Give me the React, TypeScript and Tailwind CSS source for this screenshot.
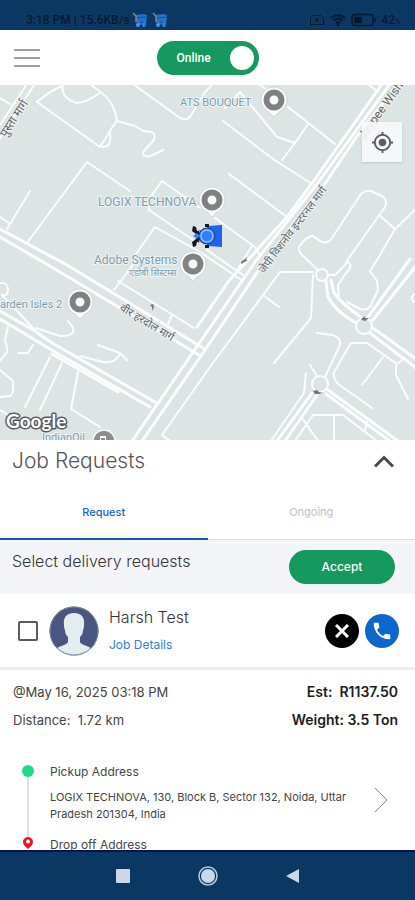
import { useState } from 'react';
import { MdPhone, MdMyLocation } from 'react-icons/md';

const roads = [
  'M27 84L-2 128 M34 85L-2 141 M0 98L10 104',
  'M62 86Q48 92 37 102L100 147L117 120Q114 102 102 93L90 84',
  'M63 84Q60 98 77 103Q88 102 101 92 M102 147Q112 148 110 133',
  'M117 121L135 126L143 131L152 132Q157 135 153 141L143 152Q142 157 151 156L163 150',
  'M133 84L180 118Q186 121 190 117L205 92L213 84',
  'M130 191L87 162L27 243 M30 191L7 229 M0 217L9 223',
  'M200 208L162 181L149 199L149 210L196 242',
  'M136 254L155 227L200 252L243 281 M135 262L114 290',
  'M118 281L194 328 M172 315L168 324',
  'M223 121L273 159L312 184 M368 84L378 92 M258 84L272 93 M240 92L225 108',
  'M240 92L277 137L295 143L308 124 M288 107L335 144 M295 143L282 160',
  'M229 174L287 217 M215 218L255 247L260 256',
  'M207 250L243 275 M252 246L236 272',
  'M320 241Q327 245 332 238L361 194Q365 190 371 191L382 196Q388 200 385 207L346 262',
  'M320 241L313 236Q306 236 299 247Q298 251 302 255L317 269',
  'M380 216L395 229L416 209 M395 229L377 260L370 271L377 281L378 290L371 305Q368 311 360 309L347 302',
  'M162 435L210 367L280 272L313 272 M162 435L170 441 M313 275L311 318L274 363 M263 295L279 307',
  'M328 275L335 275L348 262Q354 266 346 273L338 285L339 300',
  'M317 333L333 335Q342 339 340 345L325 377 M310 365L317 376 M306 373L304 393L271 441',
  'M372 408L338 384Q332 376 334 372L351 343L367 343L397 364L403 359 M383 357L362 385 M396 366L396 375L408 399',
  'M295 441L313 415L343 415L377 441 M334 415V441 M302 418L318 441 M367 422L365 430',
  'M0 283Q8 282 8 290Q8 296 2 295L35 330 M36 328L60 336Q78 336 72 326L68 321',
  'M80 356L103 362Q116 364 120 353L98 345 M120 353L127 360',
  'M8 327L5 340Q8 350 7 352L0 361 M33 345L28 353L18 353 M0 370L13 381Q14 394 10 396L0 397',
  'M50 357L25 407 M62 363L40 410 M78 372L71 409L100 427 M0 410L10 416',
];

const mainRoads = [
  'M0 229L67 265L203 348 M0 237L43 262L199 355',
  'M382 84L313 182L287 217L228 282L197 327',
  'M390 84L317 184L255 262L198 345L132 441',
  'M398 84L357 136L324 185L260 268L205 350L142 441',
  'M0 311L35 331L52 343L155 402 M0 319L50 349L150 407 M52 354L118 392',
  'M326 281L328 297Q335 311 356 323 M331 280L334 293Q342 304 361 317',
  'M368 317L410 259 M373 320L416 266 M373 328L416 359 M370 333L416 368',
  'M312 393L277 441 M317 395L285 441 M328 390L398 441 M326 394L390 441',
];

const pins = [
  { x: 274, y: 100 },
  { x: 212, y: 200 },
  { x: 193, y: 264 },
  { x: 80, y: 302 },
];

function Pin({ x, y }: { x: number; y: number }) {
  return (
    <g transform={`translate(${x} ${y})`}>
      <path d="M0 17L-5 12A13 13 0 1 1 5 12Z" fill="#fafafa" stroke="#c9cfcf" strokeWidth="0.8" />
      <circle r="7.5" fill="none" stroke="#7f8182" strokeWidth="6" />
    </g>
  );
}

function MapView() {
  return (
    <svg viewBox="0 85 415 355" preserveAspectRatio="xMidYMid slice" className="block w-full" role="img" aria-label="Map">
      <rect y="84" width="415" height="358" fill="#dde4e4" />
      <g fill="none" stroke="#fcfdfd" strokeLinecap="round" strokeLinejoin="round">
        <g strokeWidth="2">{roads.map((d) => <path key={d} d={d} />)}</g>
        <g strokeWidth="3">{mainRoads.map((d) => <path key={d} d={d} />)}</g>
        <g strokeWidth="2">
          <circle cx="322" cy="275" r="6" fill="#dde4e4" />
          <circle cx="364" cy="326" r="8" fill="#dde4e4" />
          <circle cx="320" cy="384" r="8" fill="#dde4e4" />
          <circle cx="416" cy="298" r="4" />
        </g>
      </g>
      <g fill="#71767a">
        <path d="M361 319l4-3v2l4 0-4 3-3-1zM313 391l4-1 2 2 4 1-5 1-3 0zM241 262l6-5-1 3 2 0-7 4zM150 305l3-1 1 3-2 4 0-4z" />
      </g>

      <g className="font-['Roboto','Noto_Sans',sans-serif]" fontSize="11" fill="#7a9eb0" stroke="#eef3f4" strokeWidth="2" paintOrder="stroke">
        <text x="180" y="106">ATS BOUQUET</text>
        <text x="98" y="206" fontSize="12">LOGIX TECHNOVA</text>
        <text x="94" y="264" fontSize="12">Adobe Systems</text>
        <text x="129" y="276" fontSize="9">एडोबी सिस्टम्स</text>
        <text x="0" y="308" fontSize="11">arden Isles 2</text>
        <text x="42" y="441">IndianOil</text>
      </g>
      <g className="font-['Roboto','Noto_Sans',sans-serif]" fontSize="11" fill="#5c6468" stroke="#eef3f4" strokeWidth="2" paintOrder="stroke">
        <text transform="translate(6 138) rotate(-57)" fontSize="12">पुस्ता मार्ग</text>
        <text transform="translate(264 274) rotate(-53)">जेपी विशनोव इन्टरनल मार्ग</text>
        <text transform="translate(119 310) rotate(31)">वीर हरदोल मार्ग</text>
        <text transform="translate(364 140) rotate(-54)" fontSize="12">Jaypee Wishtown</text>
      </g>

      {pins.map((p) => <Pin key={`${p.x}-${p.y}`} x={p.x} y={p.y} />)}
      <g transform="translate(104 441)">
        <circle r="11" fill="#8c8f90" stroke="#fafafa" strokeWidth="1.5" />
        <rect x="-4" y="-5" width="6" height="8" rx="1" fill="#fff" />
        <rect x="-3" y="-3" width="4" height="2" fill="#8c8f90" />
      </g>

      {/* driver vehicle */}
      <path d="M207 226l15-1v22l-15-1z" fill="#1f63ee" />
      <path d="M193 226l3 1 1 4 5-1 2-2v16l-3-2-4 0-1 4-3 1-1-5 4-3v-5l-4-3z" fill="#111820" />
      <path d="M198 230l5 1-3 3zM198 243l5-1-3-3z" fill="#b09a80" />
      <circle cx="207" cy="236" r="8" fill="#2f7cf5" stroke="#123f9c" strokeWidth="1" />
      <circle cx="207" cy="236" r="6" fill="#2b82f7" stroke="#8fbcff" strokeWidth="1.5" />
      <path d="M193 236l4-3 3 3-3 3z" fill="#2b82f7" />
      <path d="M205 224h4v3h-4zM205 245h4v3h-4z" fill="#111820" />

      <text x="6" y="428" className="font-['Lato',sans-serif]" fontSize="19" fontWeight="700" fill="#fff" stroke="#55595b" strokeWidth="3" strokeLinejoin="round" paintOrder="stroke">Google</text>
    </svg>
  );
}

function TruckGlyph() {
  return (
    <svg viewBox="0 0 16 16" className="size-4">
      <path d="M4 3l7-1 4 1-1 9-9 1-1-6z" fill="#2273cb" />
      <path d="M1 1l3 3v6" fill="none" stroke="#8d8290" strokeWidth="1.5" />
      <path d="M5 6l9-1M8 10h3" stroke="#164c94" strokeWidth="1" />
      <circle cx="6" cy="13" r="2" fill="#4b95dd" />
      <circle cx="12" cy="13" r="2" fill="#2d7fd6" />
    </svg>
  );
}

function StatusBar() {
  return (
    <div className="flex h-[30px] shrink-0 items-end border-b border-[#1c2a6e] bg-[#0b3862] px-[26px] pb-px font-['Roboto',sans-serif] text-xs text-[#03182f]">
      <span className="font-medium">3:18 PM | 15.6KB/s</span>
      <span className="ml-[2px] flex gap-1"><TruckGlyph /><TruckGlyph /></span>
      <span className="mr-[-12px] ml-auto flex items-center gap-1">
        <svg viewBox="0 0 16 14" className="h-[14px] w-4" fill="none" stroke="#03182f">
          <path d="M4 2.5h8l2.5 3v6h-13v-6zM6 5l4 4M10 5L6 9" />
        </svg>
        <svg viewBox="0 0 16 14" className="mx-px h-[14px] w-4" fill="none" stroke="#03182f" strokeWidth="1.8">
          <path d="M1 5Q8-1 15 5M3.5 7.5Q8 3.5 12.500 7.500M6 10Q8 8.500 10 10" />
          <circle cx="8" cy="12" r="0.6" />
        </svg>
        <svg viewBox="0 0 26 14" className="h-[14px] w-[26px]" fill="none" stroke="#03182f" strokeWidth="1.5">
          <rect x="1" y="1.500" width="21" height="11" rx="2.500" />
          <path d="M24 5v4" />
          <rect x="4" y="4.500" width="6" height="5" fill="#03182f" />
        </svg>
        <span className="font-medium">42<span className="text-[8px]">%</span></span>
      </span>
    </div>
  );
}

function NavBar() {
  return (
    <nav className="flex h-[50px] shrink-0 items-center justify-center gap-[68px] border-t-2 border-[#10104f] bg-[#0b3862]">
      <button type="button" aria-label="Recents">
        <span className="block size-[14px] rounded-[1px] bg-[#ccd7e7]" />
      </button>
      <button type="button" aria-label="Home">
        <svg viewBox="0 0 20 20" className="size-5">
          <circle cx="10" cy="10" r="9" fill="none" stroke="#bccadd" strokeWidth="1.500" />
          <circle cx="10" cy="10" r="7" fill="#ccd7e7" />
        </svg>
      </button>
      <button type="button" aria-label="Back">
        <svg viewBox="0 0 14 14" className="size-[14px]">
          <path d="M13 0v14L0 7z" fill="#ccd7e7" />
        </svg>
      </button>
    </nav>
  );
}

export default function App() {
  const [online, setOnline] = useState(true);
  const [tab, setTab] = useState('request');
  const [selected, setSelected] = useState(false);

  return (
    <div className="flex h-screen flex-col overflow-hidden bg-white font-['Inter',sans-serif] text-[#444]">
      <StatusBar />

      <header className="grid h-[55px] shrink-0 grid-cols-[1fr_auto_1fr] items-center px-[14px]">
        <button type="button" aria-label="Menu" className="flex w-[26px] flex-col gap-[6px]">
          <span className="h-[2px] bg-[#a0a0a0]" />
          <span className="h-[2px] bg-[#a0a0a0]" />
          <span className="h-[2px] bg-[#a0a0a0]" />
        </button>
        <button
          type="button" role="switch" aria-checked={online}
          onClick={() => setOnline(!online)}
          className="flex h-[34px] w-[102px] items-center justify-between rounded-full bg-[#16995f] pr-[5px] pl-5 font-['Roboto',sans-serif] text-xs font-medium text-white"
        >
          Online
          <span className="size-6 rounded-full bg-white" />
        </button>
      </header>

      <main className="min-h-0 flex-1 overflow-hidden">
        <div className="relative">
          <MapView />
          <button type="button" aria-label="My location" className="absolute top-[37px] right-[13px] flex size-10 items-center justify-center bg-[#f7f8f9]/90 text-[#5d5d5d] shadow">
            <MdMyLocation size={23} />
          </button>
        </div>

        <div className="flex h-[42px] items-center justify-between pr-5 pl-3">
          <h1 className="text-[21px] font-light text-[#555]">Job Requests</h1>
          <button type="button" aria-label="Collapse">
            <svg viewBox="0 0 22 14" className="h-[14px] w-[22px]" fill="none" stroke="#4a4a4a" strokeWidth="3">
              <path d="M2 12.500L11 3.500L20 12.500" />
            </svg>
          </button>
        </div>

        <div role="tablist" className="grid h-[58px] grid-cols-2 text-[11px]">
          <button
            type="button" role="tab" aria-selected={tab === 'request'}
            onClick={() => setTab('request')}
            className={tab === 'request' ? 'border-b-2 border-[#1257b8] pt-1 font-medium text-[#1763bf]' : 'border-b border-[#dcdee2] pt-1 text-[#bfc0c2]'}
          >
            Request
          </button>
          <button
            type="button" role="tab" aria-selected={tab === 'ongoing'}
            onClick={() => setTab('ongoing')}
            className={tab === 'ongoing' ? 'border-b-2 border-[#1257b8] pt-1 font-medium text-[#1763bf]' : 'border-b border-[#dcdee2] pt-1 text-[#bfc0c2]'}
          >
            Ongoing
          </button>
        </div>

        <div className="flex h-[54px] items-center justify-between bg-[#f3f5f9] pr-5 pl-3">
          <p className="pb-3 text-base font-light text-[#333]">Select delivery requests</p>
          <button type="button" className="h-[34px] w-[106px] rounded-full bg-[#16995f] text-xs font-medium text-white">
            Accept
          </button>
        </div>

        <section className="flex h-[76px] items-center border-b-[3px] border-[#eeeff1] pr-4 pl-[18px]">
          <input
            type="checkbox" aria-label="Select Harsh Test" checked={selected}
            onChange={(e) => setSelected(e.target.checked)}
            className="size-5 appearance-none rounded-[2px] border-2 border-[#5a5a5a] checked:bg-[#16995f]"
          />
          <svg viewBox="0 0 50 50" className="ml-[11px] size-[50px]">
            <defs>
              <clipPath id="avatar"><circle cx="25" cy="25" r="24.500" /></clipPath>
            </defs>
            <g clipPath="url(#avatar)">
              <rect width="50" height="50" fill="#495681" />
              <path d="M25 7c-8 0-11 5-10 12 0 2 0 3 1 5 0 3 1 5 3 7v5c-1 3-9 4-12 7l-1 7h38l-1-7c-3-3-11-4-12-7v-5c2-2 3-4 3-7 1-2 1-3 1-5 1-7-2-12-10-12z" fill="#e3ecee" />
            </g>
            <circle cx="25" cy="25" r="24" fill="none" stroke="#7f8998" strokeWidth="1" />
          </svg>
          <div className="ml-[10px] flex-1">
            <h2 className="text-base leading-6 font-light text-[#333]">Harsh Test</h2>
            <a href="#details" className="block pt-1 text-xs leading-6 text-[#2f7fd0]">Job Details</a>
          </div>
          <div className="flex gap-[6px]">
            <button type="button" aria-label="Reject" className="flex size-[34px] items-center justify-center rounded-full bg-black">
              <svg viewBox="0 0 14 14" className="size-[14px]" stroke="#fff" strokeWidth="3">
                <path d="M1 1l12 12M13 1L1 13" />
              </svg>
            </button>
            <a href="tel:0" aria-label="Call" className="flex size-[34px] items-center justify-center rounded-full bg-[#0c66cf] text-white">
              <MdPhone size={22} />
            </a>
          </div>
        </section>

        <section className="flex justify-between px-[13px] pt-2 leading-7">
          <div className="text-[13px]">
            <p>@May 16, 2025 03:18 PM</p>
            <p>Distance: &nbsp;1.72 km</p>
          </div>
          <div className="pr-1 text-right text-sm leading-7 font-semibold text-[#1c1c1c]">
            <p>Est: &nbsp;R1137.50</p>
            <p>Weight: 3.5 Ton</p>
          </div>
        </section>

        <section className="mt-7 flex pr-[27px] pl-[22px] text-[11px]">
          <div className="flex w-3 flex-col items-center pt-[3px]">
            <span className="size-3 shrink-0 rounded-full bg-[#1fdc83]" />
            <span className="h-[60px] w-[2px] bg-[#e2e2e2]" />
            <svg viewBox="0 0 10 12" className="h-3 w-[10px] shrink-0">
              <path d="M5 0a5 5 0 0 1 5 5c0 3-3 5-5 7C3 10 0 8 0 5a5 5 0 0 1 5-5z" fill="#f0141e" />
              <circle cx="5" cy="4.500" r="2" fill="#fff" />
            </svg>
          </div>
          <div className="ml-4 flex-1">
            <h3 className="text-xs leading-5">Pickup Address</h3>
            <p className="mt-[7px] leading-[17px]">LOGIX TECHNOVA, 130, Block B, Sector 132, Noida, Uttar Pradesh 201304, India</p>
            <h3 className="mt-3 text-xs leading-5">Drop off Address</h3>
          </div>
          <button type="button" aria-label="Open address" className="mt-[25px] self-start">
            <svg viewBox="0 0 14 26" className="h-[26px] w-[14px]" fill="none" stroke="#8a8a8a">
              <path d="M1 1l12 12L1 25" />
            </svg>
          </button>
        </section>
      </main>

      <NavBar />
    </div>
  );
}
